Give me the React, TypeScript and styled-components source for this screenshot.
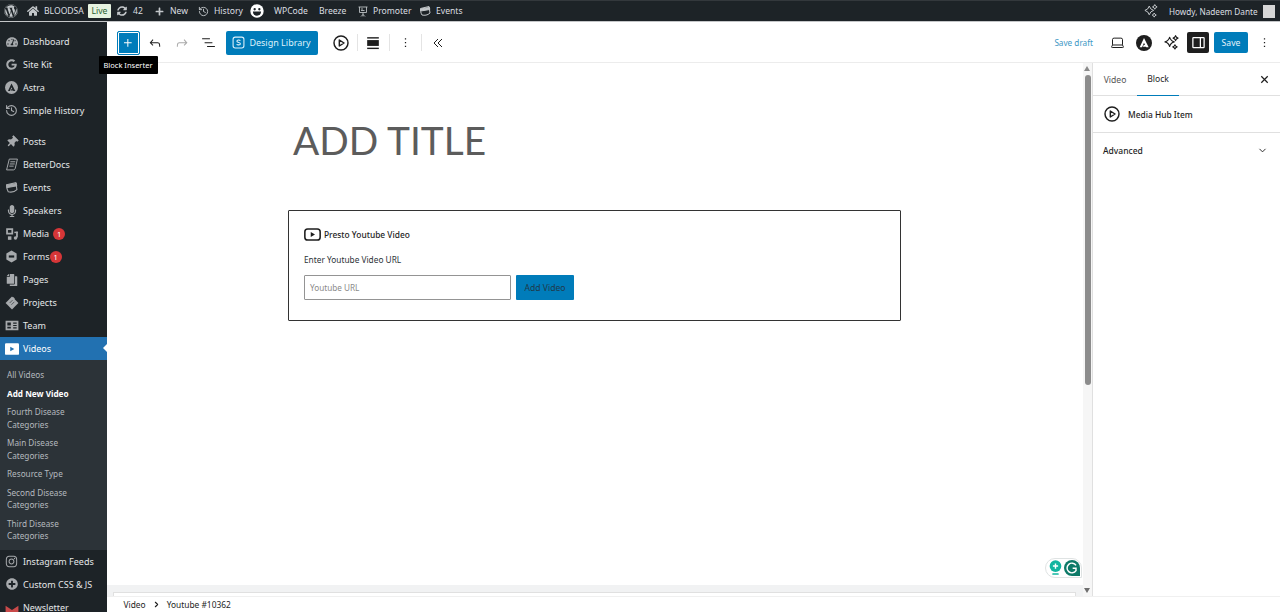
import React from 'react';
import styled, { createGlobalStyle } from 'styled-components';
import { FaWordpress, FaHome, FaSyncAlt, FaPlus, FaThumbtack, FaMicrophone, FaInstagram, FaPlusCircle, FaCopy, FaGoogle, FaTachometerAlt } from 'react-icons/fa';
import { History, Laptop, ChevronDown, ChevronRight } from 'lucide-react';

const Global = createGlobalStyle`
  html, body { margin: 0; padding: 0; height: 100%; overflow: hidden; background: #fff; }
  body { font-family: "Noto Sans", "Open Sans", sans-serif; }
  * { box-sizing: border-box; }
`;
const Page = styled.div`width:1280px;height:612px;display:flex;flex-direction:column;overflow:hidden;`;
const AdminBar = styled.header`height:22px;flex:none;background:#1d2327;border-top:1px solid #33383c;border-bottom:1px solid #c4c6c8;display:flex;align-items:center;justify-content:space-between;color:#dcdfe1;font-size:8.6px;`;
const BarGroup = styled.div`display:flex;align-items:center;height:100%;`;
const BarSlot = styled.span<{ $w: number; $c?: boolean; $pl?: number }>`width:${p => p.$w}px;padding-left:${p => p.$pl || 0}px;flex:none;display:flex;align-items:center;justify-content:${p => p.$c ? 'center' : 'flex-start'};color:#c3c7ca;white-space:nowrap;`;
const BarText = styled(BarSlot)`color:#dcdfe1;`;
const Howdy = styled(BarText)`font-size:8.2px;`;
const LiveTag = styled.span`width:23px;height:14px;background:#e6f3e0;color:#28602f;display:flex;align-items:center;justify-content:center;flex:none;font-size:8.6px;border-radius:1px;`;
const Avatar = styled.span`width:12px;height:13px;background:#d6d6d6;margin:0 5px 0 4px;display:block;`;
const Body = styled.div`flex:1;min-height:0;display:flex;`;
const Sidebar = styled.nav`width:106.5px;flex:none;background:#1d2327;color:#e4e6e8;font-size:9px;padding-top:8px;overflow:hidden;`;
const MenuGroup = styled.div<{ $gap?: boolean }>`margin-top:${p => p.$gap ? 8 : 0}px;`;
const MenuItem = styled.div<{ $active?: boolean }>`position:relative;height:23px;display:flex;align-items:center;padding-left:4px;background:${p => p.$active ? '#2271b1' : 'transparent'};color:${p => p.$active ? '#fff' : '#e4e6e8'};white-space:nowrap;
  ${p => p.$active ? `&::after{content:"";position:absolute;right:0;top:7px;border:4.5px solid transparent;border-right-color:#fff;border-left:0;}` : ''}`;
const MenuIcon = styled.span<{ $active?: boolean }>`width:15px;height:15px;margin-right:4px;display:flex;align-items:center;justify-content:center;color:${p => p.$active ? '#fff' : '#a7aaad'};flex:none;`;
const Badge = styled.span<{ $ml: number }>`width:12px;height:12px;border-radius:50%;background:#d63638;color:#fff;display:inline-flex;align-items:center;justify-content:center;font-size:7.5px;margin-left:${p => p.$ml}px;`;
const Submenu = styled.div`background:#2c3338;padding:6px 0 4px 7px;`;
const SubItem = styled.div<{ $strong?: boolean }>`font-size:8.2px;line-height:12.5px;padding:3px 0;color:${p => p.$strong ? '#fff' : '#b4b9be'};font-weight:${p => p.$strong ? 700 : 400};width:72px;`;
const Main = styled.main`flex:1;min-width:0;display:flex;flex-direction:column;background:#fff;`;
const Toolbar = styled.div`height:41px;flex:none;border-bottom:1px solid #ececec;display:flex;align-items:center;justify-content:space-between;padding:1px 5px 0 10px;`;
const ToolGroup = styled.div`display:flex;align-items:center;height:100%;`;
const InserterWrap = styled.div`position:relative;margin-right:3px;`;
const Inserter = styled.button`width:23px;height:24px;padding:0;background:#007cba;border:1px solid #007cba;box-shadow:inset 0 0 0 1px #fff;border-radius:2px;color:#fff;display:flex;align-items:center;justify-content:center;`;
const Tooltip = styled.div`position:absolute;left:-18px;top:25px;width:59px;height:18px;background:#000;color:#fff;font-size:7.5px;display:flex;align-items:center;justify-content:center;border-radius:1px;white-space:nowrap;z-index:3;`;
const IconSlot = styled.span<{ $w: number; $c?: string }>`width:${p => p.$w}px;flex:none;display:flex;align-items:center;justify-content:center;color:${p => p.$c || '#1e1e1e'};`;
const DesignButton = styled.button`width:92px;height:24px;margin:0 8px 0 7px;background:#007cba;border:0;border-radius:2px;color:#dff1fb;font:9px "Noto Sans",sans-serif;display:flex;align-items:center;justify-content:center;gap:4px;padding:0;`;
const Divider = styled.span`width:1px;height:17px;background:#e4e4e4;flex:none;`;
const SaveDraft = styled.span`font-size:8.2px;color:#3d97c5;margin-right:13px;`;
const DarkToggle = styled.span`width:22px;height:21px;background:#1e1e1e;color:#fff;display:flex;align-items:center;justify-content:center;border-radius:2px;margin-left:5px;`;
const SaveButton = styled.button`width:34px;height:21px;background:#007cba;color:#e6f4fb;border:0;border-radius:2px;font:8.6px "Noto Sans",sans-serif;margin:0 5px;padding:0;`;
const Work = styled.div`flex:1;min-height:0;display:flex;`;
const Canvas = styled.div`flex:1;min-width:0;position:relative;display:flex;flex-direction:column;`;
const Editor = styled.div`flex:1;padding:54px 0 0 181.5px;`;
const Title = styled.h1`margin:0 0 47px 5px;font:400 38.8px/46px Lato,"Noto Sans",sans-serif;color:#5c5c5c;`;
const Card = styled.section`width:613px;height:111px;border:1px solid #333;border-radius:1px;padding:15px 15px 0;`;
const CardHead = styled.div`display:flex;align-items:center;gap:3px;font-size:8.4px;font-weight:500;color:#1e1e1e;height:16px;`;
const CardLabel = styled.div`font-size:8.3px;color:#2c3338;margin-top:12px;line-height:12px;`;
const CardRow = styled.div`display:flex;gap:5px;margin-top:9px;`;
const UrlField = styled.div`width:207px;height:25px;border:1px solid #949494;border-radius:1px;padding-left:5px;display:flex;align-items:center;font-size:8.2px;color:#8a8a8a;`;
const AddButton = styled.button`width:58px;height:25px;background:#007cba;color:#1f3a4a;border:0;border-radius:1px;font:8.6px "Noto Sans",sans-serif;padding:0;`;
const BottomStrip = styled.div`height:11px;flex:none;background:#f1f2f3;padding:7px 7px 0 6px;`;
const StripInner = styled.div`height:4px;background:#fff;border:1px solid #e0e0e0;border-bottom:0;`;
const Grammarly = styled.div`position:absolute;right:1px;bottom:18px;width:37px;height:20px;border:1px solid #dfe3e3;border-radius:10px 10px 0 10px;background:#fff;display:flex;align-items:center;justify-content:space-between;padding:0 1px 0 3px;`;
const Scrollbar = styled.div`width:9px;flex:none;background:#f6f6f6;position:relative;padding-top:12px;`;
const Thumb = styled.div`width:6px;height:310px;margin:0 auto;background:#8c8c8c;border-radius:3px;`;
const Arrow = styled.span<{ $down?: boolean }>`position:absolute;left:1px;${p => p.$down ? 'bottom:3px;border-top:5px solid #6e6e6e;' : 'top:3px;border-bottom:5px solid #8a8a8a;'}border-left:3.5px solid transparent;border-right:3.5px solid transparent;`;
const Panel = styled.aside`width:188px;flex:none;border-left:1px solid #e0e0e0;font-size:8.6px;color:#1e1e1e;`;
const Tabs = styled.div`height:33px;border-bottom:1px solid #e0e0e0;display:flex;align-items:stretch;position:relative;`;
const Tab = styled.span<{ $active?: boolean; $w: number }>`width:${p => p.$w}px;display:flex;align-items:center;justify-content:center;color:${p => p.$active ? '#1e1e1e' : '#555'};margin-bottom:-1px;border-bottom:${p => p.$active ? '1.5px solid #007cba' : '0'};`;
const CloseSlot = styled.span`margin-left:auto;width:32px;display:flex;align-items:center;justify-content:center;`;
const BlockCard = styled.div`height:37px;border-bottom:1px solid #e0e0e0;display:flex;align-items:center;gap:8px;padding-left:11px;font-size:8.4px;font-weight:500;color:#1e1e1e;`;
const Advanced = styled.div`height:34px;display:flex;align-items:center;justify-content:space-between;padding:0 12px 0 10px;font-size:8.5px;font-weight:500;`;
const Footer = styled.footer`height:16px;flex:none;border-top:1px solid #f0f0f0;display:flex;align-items:center;padding-left:17px;font-size:8.4px;color:#1e1e1e;gap:6px;`;

const PlayCircle = ({ s = 16 }: { s?: number }) => (
  <svg width={s} height={s} viewBox="0 0 24 24" fill="none" stroke="currentColor" strokeWidth="2.2"><circle cx="12" cy="12" r="10.5" /><path d="M9.5 7.5v9l7-4.5z" strokeLinejoin="round" /></svg>
);
const Star = ({ x, y, r }: { x: number; y: number; r: number }) => (
  <path d={`M${x} ${y - r}Q${x + r * 0.2} ${y - r * 0.2} ${x + r} ${y}Q${x + r * 0.2} ${y + r * 0.2} ${x} ${y + r}Q${x - r * 0.2} ${y + r * 0.2} ${x - r} ${y}Q${x - r * 0.2} ${y - r * 0.2} ${x} ${y - r}Z`} />
);
const Sparkles = ({ s = 16 }: { s?: number }) => (
  <svg width={s} height={s} viewBox="0 0 24 24" fill="none" stroke="currentColor" strokeWidth="1.7" strokeLinejoin="round"><Star x={9} y={11} r={7.5} /><Star x={18.5} y={5} r={4} /><Star x={17.5} y={19} r={3.5} /></svg>
);
const DesignS = () => (
  <svg width="13" height="13" viewBox="0 0 24 24" fill="none" stroke="currentColor" strokeWidth="2"><rect x="2" y="2" width="20" height="20" rx="4" /><path d="M15.5 8.5c-1-1.2-6.5-1.8-6.5 1.2s6.5 1.6 6.5 4.6-5.7 2.4-7 1" /></svg>
);
const Align = () => (
  <svg width="14" height="14" viewBox="0 0 24 24" fill="currentColor"><rect x="2" y="2" width="20" height="2.4" /><rect x="2" y="7" width="20" height="10" /><rect x="2" y="20" width="20" height="2.4" /></svg>
);
const UndoIcon = () => <svg width="16" height="16" viewBox="0 0 24 24" fill="currentColor"><path d="M18.3 11.7c-.6-.6-1.4-.9-2.3-.9H6.7l2.9-3.3-1.1-1-4.5 5L8.5 16l1-1-2.7-2.7H16c.5 0 .9.2 1.3.5 1 1 1 3.4 1 4.5v.3h1.5v-.2c0-1.5 0-4.3-1.5-5.7z" /></svg>;
const RedoIcon = () => <svg width="16" height="16" viewBox="0 0 24 24" fill="currentColor"><path d="M15.6 6.5l-1.1 1 2.9 3.3H8c-.9 0-1.7.3-2.3.9-1.4 1.5-1.4 4.2-1.4 5.6v.2h1.5v-.3c0-1.1 0-3.5 1-4.5.3-.3.7-.5 1.3-.5h9.2L14.5 15l1.1 1.1 4.6-4.6-4.6-5z" /></svg>;
const ListIcon = () => <svg width="17" height="17" viewBox="0 0 24 24" fill="currentColor"><path d="M3 6h11v1.5H3V6Zm3.5 5.5h11V13h-11v-1.5ZM21 17H10v1.5h11V17Z" /></svg>;
const MoreIcon = () => <svg width="15" height="15" viewBox="0 0 24 24" fill="currentColor"><path d="M13 19h-2v-2h2v2zm0-6h-2v-2h2v2zm0-6h-2V5h2v2z" /></svg>;
const CloseIcon = () => <svg width="11" height="11" viewBox="0 0 24 24" fill="none" stroke="currentColor" strokeWidth="2.6"><path d="M5 5l14 14M19 5 5 19" /></svg>;
const PlusIcon = () => <svg width="16" height="16" viewBox="0 0 24 24" fill="currentColor"><path d="M11 12.5V17.5H12.5V12.5H17.5V11H12.5V6H11V11H6V12.5H11Z" /></svg>;
const PanelIcon = () => <svg width="15" height="15" viewBox="0 0 24 24" fill="none" stroke="currentColor" strokeWidth="2"><rect x="3" y="4" width="18" height="16" rx="1" /><path d="M15 4v16" /></svg>;
const DoubleChevron = () => <svg width="12" height="12" viewBox="0 0 24 24" fill="none" stroke="currentColor" strokeWidth="2"><path d="M12 4 4 12l8 8M20 4l-8 8 8 8" /></svg>;
const AstraIcon = ({ s, bg, fg }: { s: number; bg: string; fg: string }) => (
  <svg width={s} height={s} viewBox="0 0 24 24"><circle cx="12" cy="12" r="12" fill={bg} /><path d="M12 4.5 5.5 18.5h3.6L12 11.5l1.5 3.5h-2l-1 2.5h4.4l.5 1h3.6z" fill={fg} /></svg>
);
const VideoOutline = () => (
  <svg width="17" height="13" viewBox="0 0 24 18" fill="none" stroke="currentColor" strokeWidth="2.2"><rect x="1.2" y="1.2" width="21.6" height="15.6" rx="4" /><path d="M9.5 5.5v7l6-3.5z" fill="currentColor" stroke="none" /></svg>
);
const VideoSquare = () => (
  <svg width="14" height="12" viewBox="0 0 24 20" fill="#fff"><rect width="24" height="20" rx="2" /><path d="M9 6v8l7-4z" fill="#2271b1" /></svg>
);
const FormsIcon = () => (
  <svg width="13" height="13" viewBox="0 0 24 24"><path d="M12 1l9.5 5.5v11L12 23l-9.5-5.5v-11z" fill="currentColor" /><rect x="7" y="10" width="10" height="4" fill="#1d2327" /></svg>
);
const MailIcon = () => (
  <svg width="14" height="12" viewBox="0 0 24 20" fill="#c94a4a"><path d="M1 8l11 7 11-7v12H1z" /></svg>
);
const EventsIcon = ({ s = 13 }: { s?: number }) => (
  <svg width={s} height={s} viewBox="0 0 24 24" fill="none" stroke="currentColor" strokeWidth="2"><path d="M3 7 20 3l2 13c-5 5-11 5-16 4C3 15 3 11 3 7z" /><path d="M3 8l18-3 .5 4L3.5 12z" fill="currentColor" /></svg>
);
const BookIcon = () => (
  <svg width="14" height="13" viewBox="0 0 24 24" fill="none" stroke="currentColor" strokeWidth="1.8"><path d="M7 2h15l-4 17c-.4 2-2 3-3.500 3H2l1-4z" /><path d="M9 7h9M8 11h9M7 15h8" /></svg>
);
const MediaIcon = () => (
  <svg width="14" height="14" viewBox="0 0 24 24" fill="currentColor"><path d="M2 2h12v11H2zM5 5v5h6V5z" fillRule="evenodd" /><rect x="16" y="8" width="6" height="2.500" /><rect x="19" y="8" width="3" height="10" /><circle cx="18" cy="19" r="3" /><rect x="5" y="16" width="6" height="6" /></svg>
);
const ProjectsIcon = () => (
  <svg width="14" height="14" viewBox="0 0 24 24" fill="currentColor"><path d="M12 1 23 12 12 23 1 12z" /><path d="M11 3l4-1 2 3-2 2z" /><path d="M8 12l5-5M11 15l5-5" stroke="#1d2327" strokeWidth="1" /></svg>
);
const TeamIcon = () => (
  <svg width="14" height="11" viewBox="0 0 24 18" fill="currentColor"><path d="M1 1h22v16H1zM4 4v5h6V4zM14 4v2h6V4zM14 8v2h6V8zM4 11v3h6v-3zM14 12v2h6v-2z" fillRule="evenodd" /></svg>
);
const SmileBadge = () => (
  <svg width="14" height="14" viewBox="0 0 24 24"><circle cx="12" cy="12" r="11.500" fill="#fff" /><circle cx="8" cy="9" r="2" fill="#1d2327" /><circle cx="16" cy="9" r="2" fill="#1d2327" /><path d="M5 13h14c0 5-3 7-7 7s-7-2-7-7z" fill="#1d2327" /></svg>
);
const PromoterIcon = () => (
  <svg width="13" height="13" viewBox="0 0 24 24" fill="none" stroke="currentColor" strokeWidth="1.700"><path d="M3 3h18M5 3v11h14V3M12 14v8M8 22l4-4 4 4" /><path d="M8 7h4M8 10h7" /></svg>
);
const Bulb = () => (
  <svg width="13" height="16" viewBox="0 0 20 24"><circle cx="10" cy="9" r="9" fill="#12b5a0" /><path d="M10 5v8M6 9h8" stroke="#fff" strokeWidth="2.200" /><rect x="5" y="20" width="10" height="2.500" rx="1" fill="#12b5a0" /></svg>
);
const GrammarlyMark = () => (
  <svg width="16" height="16" viewBox="0 0 24 24"><path d="M12 0a12 12 0 0 1 12 12v12H12A12 12 0 0 1 12 0z" fill="#0d7a68" /><path d="M18 8a7.300 7.300 0 1 0 0 8v-3.500h-5" fill="none" stroke="#fff" strokeWidth="2.200" /></svg>
);

type Row = { label: string; icon: React.ReactNode; badge?: number; active?: boolean };
const top: Row[] = [
  { label: 'Dashboard', icon: <FaTachometerAlt size={12} /> },
  { label: 'Site Kit', icon: <FaGoogle size={11} /> },
  { label: 'Astra', icon: <AstraIcon s={13} bg="#a7aaad" fg="#1d2327" /> },
  { label: 'Simple History', icon: <History size={13} /> },
];
const middle: Row[] = [
  { label: 'Posts', icon: <FaThumbtack size={12} style={{ transform: 'rotate(45deg)' }} /> },
  { label: 'BetterDocs', icon: <BookIcon /> },
  { label: 'Events', icon: <EventsIcon /> },
  { label: 'Speakers', icon: <FaMicrophone size={12} /> },
  { label: 'Media', icon: <MediaIcon />, badge: 4 },
  { label: 'Forms', icon: <FormsIcon />, badge: 0 },
  { label: 'Pages', icon: <FaCopy size={12} style={{ transform: 'scaleX(-1)' }} /> },
  { label: 'Projects', icon: <ProjectsIcon /> },
  { label: 'Team', icon: <TeamIcon /> },
  { label: 'Videos', icon: <VideoSquare />, active: true },
];
const subItems = ['All Videos', 'Add New Video', 'Fourth Disease Categories', 'Main Disease Categories', 'Resource Type', 'Second Disease Categories', 'Third Disease Categories'];
const bottom: Row[] = [
  { label: 'Instagram Feeds', icon: <FaInstagram size={13} /> },
  { label: 'Custom CSS & JS', icon: <FaPlusCircle size={12} /> },
  { label: 'Newsletter', icon: <MailIcon /> },
];

const Item = ({ row }: { row: Row }) => (
  <MenuItem $active={row.active}>
    <MenuIcon $active={row.active}>{row.icon}</MenuIcon>
    {row.label}
    {row.badge !== undefined && <Badge $ml={row.badge}>1</Badge>}
  </MenuItem>
);

export default function App() {
  return (
    <Page>
      <Global />
      <AdminBar>
        <BarGroup>
          <BarSlot $w={21} $c><FaWordpress size={14} /></BarSlot>
          <BarSlot $w={23} $c><FaHome size={12} /></BarSlot>
          <BarText $w={44}>BLOODSA</BarText>
          <LiveTag>Live</LiveTag>
          <BarSlot $w={22} $c><FaSyncAlt size={10} /></BarSlot>
          <BarText $w={20}>42</BarText>
          <BarSlot $w={12} $c><FaPlus size={9} /></BarSlot>
          <BarText $w={32} $pl={5}>New</BarText>
          <BarSlot $w={12} $c><History size={11} /></BarSlot>
          <BarText $w={41} $pl={5}>History</BarText>
          <BarSlot $w={14} $c><SmileBadge /></BarSlot>
          <BarSlot $w={10} />
          <BarText $w={45}>WPCode</BarText>
          <BarText $w={38}>Breeze</BarText>
          <BarSlot $w={12} $c><PromoterIcon /></BarSlot>
          <BarText $w={49} $pl={4}>Promoter</BarText>
          <BarSlot $w={14} $c><EventsIcon s={12} /></BarSlot>
          <BarText $w={33} $pl={4}>Events</BarText>
        </BarGroup>
        <BarGroup>
          <BarSlot $w={16} $c><Sparkles s={14} /></BarSlot>
          <BarSlot $w={10} />
          <Howdy $w={90}>Howdy, Nadeem Dante</Howdy>
          <Avatar />
        </BarGroup>
      </AdminBar>
      <Body>
        <Sidebar>
          <MenuGroup>{top.map(r => <Item key={r.label} row={r} />)}</MenuGroup>
          <MenuGroup $gap>{middle.map(r => <Item key={r.label} row={r} />)}</MenuGroup>
          <Submenu>{subItems.map((s, i) => <SubItem key={s} $strong={i === 1}>{s}</SubItem>)}</Submenu>
          <MenuGroup>{bottom.map(r => <Item key={r.label} row={r} />)}</MenuGroup>
        </Sidebar>
        <Main>
          <Toolbar>
            <ToolGroup>
              <InserterWrap>
                <Inserter aria-label="Block Inserter"><PlusIcon /></Inserter>
                <Tooltip>Block Inserter</Tooltip>
              </InserterWrap>
              <IconSlot $w={24}><UndoIcon /></IconSlot>
              <IconSlot $w={31} $c="#a9a9a9"><RedoIcon /></IconSlot>
              <IconSlot $w={21}><ListIcon /></IconSlot>
              <DesignButton><DesignS />Design Library</DesignButton>
              <IconSlot $w={31}><PlayCircle /></IconSlot>
              <Divider />
              <IconSlot $w={31}><Align /></IconSlot>
              <Divider />
              <IconSlot $w={31}><MoreIcon /></IconSlot>
              <Divider />
              <IconSlot $w={32}><DoubleChevron /></IconSlot>
            </ToolGroup>
            <ToolGroup>
              <SaveDraft>Save draft</SaveDraft>
              <IconSlot $w={22}><Laptop size={15} strokeWidth={1.6} /></IconSlot>
              <IconSlot $w={32}><AstraIcon s={16} bg="#1e1e1e" fg="#fff" /></IconSlot>
              <IconSlot $w={22}><Sparkles s={15} /></IconSlot>
              <DarkToggle><PanelIcon /></DarkToggle>
              <SaveButton>Save</SaveButton>
              <IconSlot $w={22}><MoreIcon /></IconSlot>
            </ToolGroup>
          </Toolbar>
          <Work>
            <Canvas>
              <Editor>
                <Title>ADD TITLE</Title>
                <Card>
                  <CardHead><VideoOutline />Presto Youtube Video</CardHead>
                  <CardLabel>Enter Youtube Video URL</CardLabel>
                  <CardRow>
                    <UrlField>Youtube URL</UrlField>
                    <AddButton>Add Video</AddButton>
                  </CardRow>
                </Card>
              </Editor>
              <BottomStrip><StripInner /></BottomStrip>
              <Grammarly>
                <Bulb />
                <GrammarlyMark />
              </Grammarly>
            </Canvas>
            <Scrollbar>
              <Arrow />
              <Thumb />
              <Arrow $down />
            </Scrollbar>
            <Panel>
              <Tabs>
                <Tab $w={44}>Video</Tab>
                <Tab $w={42} $active>Block</Tab>
                <CloseSlot><CloseIcon /></CloseSlot>
              </Tabs>
              <BlockCard><PlayCircle />Media Hub Item</BlockCard>
              <Advanced>Advanced<ChevronDown size={11} /></Advanced>
            </Panel>
          </Work>
          <Footer>Video<ChevronRight size={9} strokeWidth={3} />Youtube #10362</Footer>
        </Main>
      </Body>
    </Page>
  );
}
